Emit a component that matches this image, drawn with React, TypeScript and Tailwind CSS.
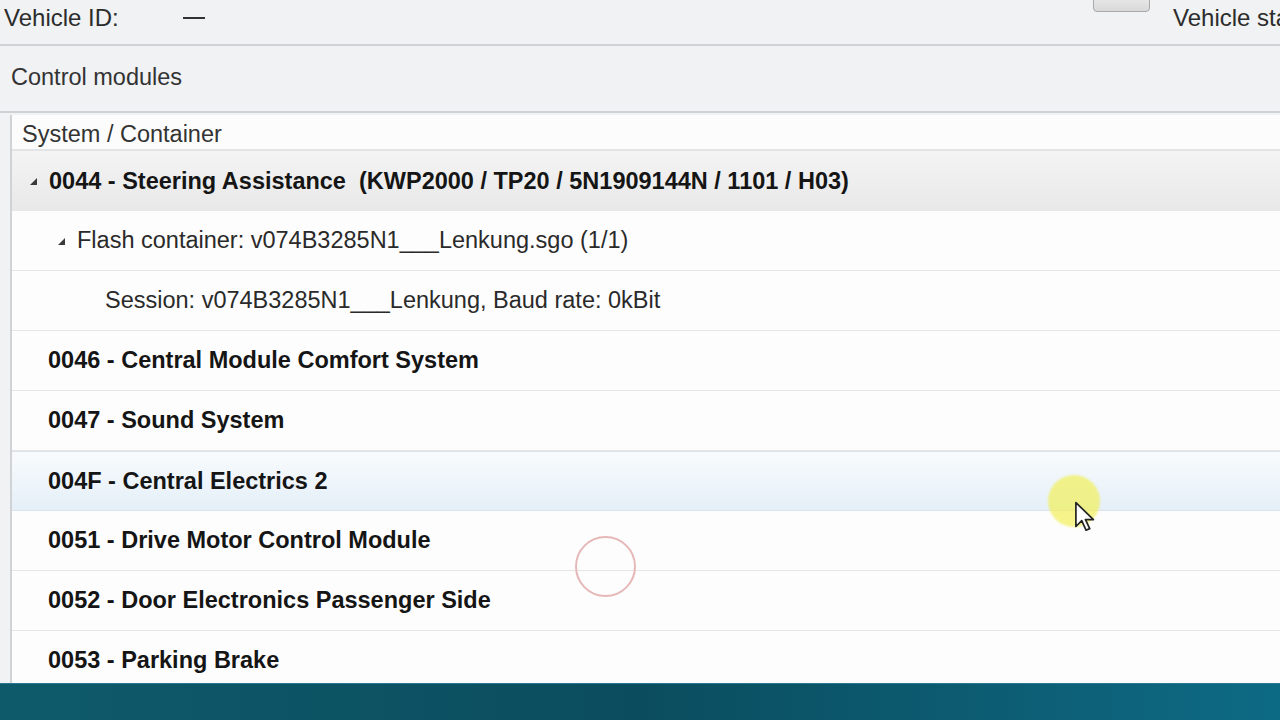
import React from 'react'

const font = { fontFamily: '"Liberation Sans", Arial, sans-serif' }

function Expander() {
  return (
    <svg width="9" height="9" viewBox="0 0 9 9" className="shrink-0">
      <polygon points="8,1 8,8 1,8" fill="#3a3a3a" />
    </svg>
  )
}

interface RowProps {
  children: React.ReactNode
  indent: number
  bold?: boolean
  expander?: boolean
  variant?: 'group' | 'hover' | 'plain'
}

function Row({ children, indent, bold, expander, variant = 'plain' }: RowProps) {
  const bg =
    variant === 'group'
      ? 'bg-gradient-to-b from-[#f4f4f4] to-[#e8e8e8]'
      : variant === 'hover'
        ? 'bg-gradient-to-b from-[#f8fbfd] to-[#e5eff8] border-y border-[#dbe4ec]'
        : 'bg-[#fdfdfd] border-b border-[#e6e6e6]'
  return (
    <div className={`h-[60px] pt-[1px] ${bg} flex items-center shrink-0`} style={{ paddingLeft: indent }}>
      {expander && (
        <span className="mr-[11px] flex items-center">
          <Expander />
        </span>
      )}
      <span
        className={`text-[23.5px] whitespace-pre ${bold ? 'font-bold text-[#151515]' : 'font-normal text-[#2a2a2a]'}`}
      >
        {children}
      </span>
    </div>
  )
}

export default function App() {
  return (
    <div className="w-[1280px] h-[720px] overflow-hidden bg-[#f0f2f3] relative" style={font}>
      {/* top bar */}
      <div className="h-[46px] relative border-b-2 border-[#cfd2d4]">
        <span className="absolute left-[4px] top-[0px] text-[24px] text-[#2c2c2c]">Vehicle ID:</span>
        <span className="absolute left-[183px] top-[17px] w-[22px] h-[2px] bg-[#333]" />
        <div className="absolute left-[1093px] top-[-12px] w-[57px] h-[24px] rounded-[4px] border border-[#a9a9a9] bg-gradient-to-b from-[#f2f2f2] to-[#d9d9d9]" />
        <div className="absolute left-[1173px] right-0 top-[0px] overflow-hidden">
          <span className="text-[24px] text-[#2c2c2c] whitespace-nowrap">Vehicle sta</span>
        </div>
      </div>

      {/* control modules caption */}
      <div className="h-[67px] flex items-center pl-[11px] pt-[1px] pb-[2px] border-b-2 border-[#cfd2d4]">
        <span className="text-[23.5px] text-[#333]">Control modules</span>
      </div>

      {/* table */}
      <div className="mt-[2px] ml-[10px] border-l-2 border-[#cfd3d5] bg-[#fdfdfd] flex flex-col h-[570px]">
        <div className="h-[36px] pt-[5px] flex items-center pl-[10px] border-b-2 border-[#e2e4e5] bg-[#fcfcfc] shrink-0">
          <span className="text-[23.5px] text-[#333]">System / Container</span>
        </div>
        <Row indent={17} bold expander variant="group">
          0044 - Steering Assistance  (KWP2000 / TP20 / 5N1909144N / 1101 / H03)
        </Row>
        <Row indent={45} expander>
          Flash container: v074B3285N1___Lenkung.sgo (1/1)
        </Row>
        <Row indent={93}>Session: v074B3285N1___Lenkung, Baud rate: 0kBit</Row>
        <Row indent={36} bold>0046 - Central Module Comfort System</Row>
        <Row indent={36} bold>0047 - Sound System</Row>
        <Row indent={36} bold variant="hover">004F - Central Electrics 2</Row>
        <Row indent={36} bold>0051 - Drive Motor Control Module</Row>
        <Row indent={36} bold>0052 - Door Electronics Passenger Side</Row>
        <Row indent={36} bold>0053 - Parking Brake</Row>
      </div>

      {/* taskbar */}
      <div className="absolute left-0 right-0 top-[683px] h-[37px] bg-gradient-to-r from-[#0e5a6b] via-[#0b4d5f] to-[#0d6a84] border-t border-[#2a7890]" />

      {/* click marker */}
      <div className="absolute left-[575px] top-[536px] w-[61px] h-[61px] rounded-full border-2 border-[#e6b8b8]" />

      {/* cursor highlight */}
      <div className="absolute left-[1048px] top-[475px] w-[52px] h-[52px] rounded-full bg-[#f2f05a] opacity-70 blur-[1px]" />
      <svg className="absolute left-[1074px] top-[501px]" width="24" height="34" viewBox="0 0 22 32">
        <path
          d="M1.5 1.5 L1.5 24 L7 18.5 L11 27.5 L14.5 26 L10.5 17.5 L18 17.5 Z"
          fill="#ffffff"
          stroke="#222"
          strokeWidth="1.6"
          strokeLinejoin="round"
        />
      </svg>
    </div>
  )
}
